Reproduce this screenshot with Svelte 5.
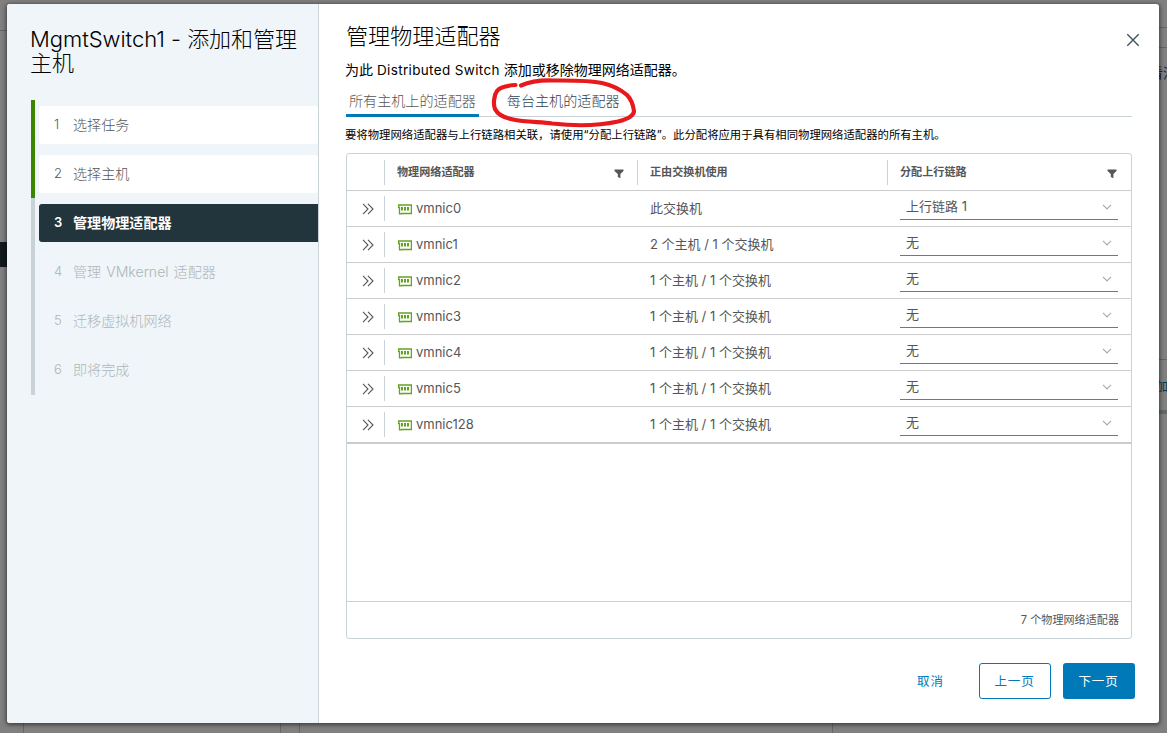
<script>
  // Wizard steps
  const steps = [
    { label: '选择任务', state: 'done' },
    { label: '选择主机', state: 'done' },
    { label: '管理物理适配器', state: 'active' },
    { label: '管理 VMkernel 适配器', state: 'pending' },
    { label: '迁移虚拟机网络', state: 'pending' },
    { label: '即将完成', state: 'pending' },
  ];

  // Physical adapters
  const adapters = [
    { name: 'vmnic0', usage: '此交换机', uplink: '上行链路 1' },
    { name: 'vmnic1', usage: '2 个主机 / 1 个交换机', uplink: '无' },
    { name: 'vmnic2', usage: '1 个主机 / 1 个交换机', uplink: '无' },
    { name: 'vmnic3', usage: '1 个主机 / 1 个交换机', uplink: '无' },
    { name: 'vmnic4', usage: '1 个主机 / 1 个交换机', uplink: '无' },
    { name: 'vmnic5', usage: '1 个主机 / 1 个交换机', uplink: '无' },
    { name: 'vmnic128', usage: '1 个主机 / 1 个交换机', uplink: '无' },
  ];

  let activeTab = $state('all');
</script>

{#snippet filterIcon()}
  <svg class="filter" width="10" height="10" viewBox="0 0 10 10">
    <path d="M0.5 0.5h9v1.4L6.4 5v4.2L3.8 8V5L0.5 1.9z" fill="#565656" />
  </svg>
{/snippet}

<div class="screen">
  <!-- Dimmed page behind the dialog -->
  <svg class="backdrop" width="1167" height="733" viewBox="0 0 1167 733">
    <path d="M0 30.5h8M1158 27.5h9M1158 47.5h9M1158 359.5h9M23.5 722v11M280.5 722v11M299.5 722v11M832.5 722v11" stroke="#666" />
    <rect x="0" y="242" width="7" height="25" fill="#11191d" />
    <rect x="1158" y="410" width="9" height="4" fill="#61686c" />
    <text x="1149" y="78" font-size="14" fill="#17203d">看清</text>
    <text x="1156" y="391" font-size="12" fill="#003b56">加</text>
  </svg>

  <div class="dialog">
    <aside class="sidebar">
      <h1>MgmtSwitch1 - <span>添加和管理</span><br />主机</h1>
      <ol class="steps">
        {#each steps as step, i}
          <li class={step.state}>
            <button type="button" disabled={step.state === 'pending'}>
              <span class="number">{i + 1}</span>
              <span>{step.label}</span>
            </button>
          </li>
        {/each}
      </ol>
    </aside>

    <main class="content">
      <header class="title-row">
        <h2>管理物理适配器</h2>
        <button type="button" class="close" aria-label="关闭">
          <svg width="14" height="14" viewBox="0 0 14 14">
            <path d="M1.3 1.3l11.4 11.4M12.7 1.3L1.3 12.7" stroke="#42535b" stroke-width="1.4" />
          </svg>
        </button>
      </header>

      <p class="subtitle">为此 <span class="latin">Distributed Switch</span> 添加或移除物理网络适配器。</p>

      <nav class="tabs">
        <button type="button" class:selected={activeTab === 'all'} onclick={() => (activeTab = 'all')}>所有主机上的适配器</button>
        <button type="button" class:selected={activeTab === 'host'} onclick={() => (activeTab = 'host')}>每台主机的适配器</button>
        <!-- Hand-drawn highlight around the second tab -->
        <svg class="marker" width="150" height="54" viewBox="488 76 150 54">
          <path
            d="M515.5 85C507 85.5 500 87 497 91C494 95 493 104 495 109C498 115 505 118 513 119.500C524 122 541 122 552 123.5C574 126 600 125.5 618 121.5C628 119 634 116 634 111C633 104 631 99 627 95C620 89 611 85 602 83C588 80 570 80.5 553 80.5C539 80 529 82 521 85.5"
            fill="none"
            stroke="#e8191c"
            stroke-width="4.2"
            stroke-linecap="round"
            stroke-linejoin="round"
          />
        </svg>
      </nav>

      <p class="hint">要将物理网络适配器与上行链路相关联，请使用“分配上行链路”。此分配将应用于具有相同物理网络适配器的所有主机。</p>

      <section class="datagrid">
        <div class="row head">
          <div class="cell expand"></div>
          <div class="cell name"><span>物理网络适配器</span>{@render filterIcon()}</div>
          <div class="cell usage"><span>正由交换机使用</span></div>
          <div class="cell uplink"><span>分配上行链路</span>{@render filterIcon()}</div>
        </div>
        {#each adapters as adapter}
          <div class="row">
            <div class="cell expand">
              <svg width="12" height="12" viewBox="0 0 12 12">
                <path d="M1 0.8L6 6L1 11.2M6 0.8L11 6L6 11.2" fill="none" stroke="#565656" stroke-width="1.1" />
              </svg>
            </div>
            <div class="cell name">
              <svg class="nic" width="14" height="11" viewBox="0 0 14 11">
                <path d="M1.5 7V9.9H3.5V9.5H13.4V1H0.6V3.5H1.5V7" fill="none" stroke="#62a420" stroke-width="1.3" />
                <path d="M4 3v3.5M7 3v3.5M10 3v3.5" stroke="#62a420" stroke-width="2" />
              </svg>
              <span>{adapter.name}</span>
            </div>
            <div class="cell usage"><span>{adapter.usage}</span></div>
            <div class="cell uplink">
              <div class="select">
                <span>{adapter.uplink}</span>
                <svg width="10" height="6" viewBox="0 0 10 6">
                  <path d="M1 0.8L5 4.8L9 0.8" fill="none" stroke="#aaa" stroke-width="1.2" />
                </svg>
              </div>
            </div>
          </div>
        {/each}
        <div class="filler"></div>
        <footer class="grid-footer">{adapters.length} 个物理网络适配器</footer>
      </section>

      <div class="actions">
        <button type="button" class="btn btn-link">取消</button>
        <button type="button" class="btn btn-outline">上一页</button>
        <button type="button" class="btn btn-primary">下一页</button>
      </div>
    </main>
  </div>
</div>

<style>
  :global(body) {
    overflow: hidden;
  }

  .screen {
    position: relative;
    box-sizing: border-box;
    width: 1167px;
    height: 733px;
    padding: 4px 8px 10px 7px;
    background: #808080;
    font-family: Inter, 'Noto Sans CJK SC', sans-serif;
    font-size: 13px;
    color: #565656;
    overflow: hidden;
  }

  .screen * {
    box-sizing: border-box;
  }

  button {
    font-family: inherit;
    background: none;
    border: 0;
    padding: 0;
    cursor: pointer;
  }

  .backdrop {
    position: absolute;
    top: 0;
    left: 0;
  }

  .dialog {
    position: relative;
    display: flex;
    height: 719px;
    border-radius: 3px;
    background: #fff;
    box-shadow: 0 1px 4px 1px rgba(0, 0, 0, 0.5);
    overflow: hidden;
  }

  .sidebar {
    width: 312px;
    flex: none;
    padding: 23px 0 0 24px;
    background: #eff5f8;
    border-right: 1px solid #c8d2d7;
  }

  h1 {
    height: 73px;
    margin: 0 0 0 -1px;
    font-size: 22px;
    font-weight: 300;
    line-height: 24px;
    letter-spacing: -0.03px;
    color: #000;
    white-space: nowrap;
  }

  .steps {
    list-style: none;
    margin: 0;
    padding: 0;
  }

  .steps li {
    height: 49px;
    padding: 6px 0 5px 4px;
    border-left: 4px solid #c8d2d7;
  }

  .steps li:last-child {
    height: 50px;
  }

  .steps li.done {
    border-left-color: #3c8500;
  }

  .steps button {
    display: flex;
    align-items: center;
    width: 100%;
    height: 38px;
    padding: 0 0 2px 15px;
    border-radius: 3px;
    font-size: 14.1px;
    font-weight: 300;
    text-align: left;
    color: #565656;
  }

  .steps .number {
    width: 19px;
    font-size: 13px;
  }

  .done button {
    background: #fff;
  }

  .active button {
    border-radius: 3px 0 0 3px;
    background: #22343c;
    color: #fff;
    font-weight: 600;
  }

  .pending button {
    color: #adb6ba;
    word-spacing: 1px;
  }

  .content {
    flex: 1;
    display: flex;
    flex-direction: column;
    padding: 17px 24px 0 27px;
  }

  .title-row {
    display: flex;
    justify-content: space-between;
    height: 36px;
    margin-right: -5px;
  }

  h2 {
    margin: 0;
    font-size: 22.1px;
    font-weight: 300;
    line-height: 30px;
    color: #000;
  }

  .close {
    width: 14px;
    height: 14px;
    margin: 12px 0 0;
    line-height: 0;
  }

  .subtitle {
    height: 27px;
    margin: 0 0 0 -1px;
    font-size: 14px;
    line-height: 26px;
    color: #000;
    white-space: nowrap;
  }

  .subtitle .latin {
    font-size: 13.5px;
    letter-spacing: 0.35px;
  }

  .tabs {
    position: relative;
    display: flex;
    gap: 25px;
    width: 786px;
    height: 33px;
    border-bottom: 1px solid #c8d2d7;
  }

  .tabs button {
    height: 33px;
    padding: 3px 3px 0;
    border-bottom: 3px solid transparent;
    font-size: 14.1px;
    font-weight: 300;
    line-height: 28px;
    color: #314351;
    white-space: nowrap;
  }

  .tabs button.selected {
    border-bottom-color: #0079b8;
    color: #565656;
  }

  .marker {
    position: absolute;
    top: -8px;
    left: 142px;
    pointer-events: none;
  }

  .hint {
    height: 36px;
    margin: 0 0 0 -1px;
    font-size: 11.37px;
    line-height: 36px;
    color: #000;
    white-space: nowrap;
  }

  .datagrid {
    display: flex;
    flex-direction: column;
    width: 786px;
    height: 486px;
    border: 1px solid #c8d2d7;
    border-radius: 3px;
  }

  .row {
    display: flex;
    align-items: center;
    height: 36px;
    border-bottom: 1px solid #ccc;
  }

  .row:nth-last-child(3) {
    height: 37px;
    border-bottom-width: 2px;
  }

  .head {
    height: 37px;
    font-size: 11.1px;
    font-weight: 600;
  }

  .cell {
    display: flex;
    align-items: center;
    height: 25px;
    padding-left: 12px;
    white-space: nowrap;
  }

  .cell > span {
    padding-bottom: 2px;
  }

  .expand {
    width: 38px;
    padding-left: 15px;
    border-right: 1px solid #c8d2d7;
  }

  .name {
    width: 253px;
  }

  .usage {
    width: 250px;
  }

  .uplink {
    width: 243px;
  }

  .head .name,
  .head .usage {
    border-right: 1px solid #c8d2d7;
  }

  .filter {
    margin: 3px 13px 0 auto;
  }

  .head .uplink .filter {
    margin-right: 14px;
  }

  .nic {
    margin: 1px 4px 0 1px;
  }

  .select {
    display: flex;
    align-items: center;
    justify-content: space-between;
    width: 218px;
    height: 25px;
    margin-bottom: 1px;
    padding: 0 6px 1px;
    border-bottom: 1px solid #6a7a81;
  }

  .select span {
    padding-bottom: 2px;
  }

  .row:not(.head) .uplink {
    align-items: flex-end;
  }

  .filler {
    flex: 1;
  }

  .grid-footer {
    height: 37px;
    padding-right: 12px;
    border-top: 1px solid #c8d2d7;
    font-size: 11.1px;
    line-height: 37px;
    text-align: right;
  }

  .actions {
    display: flex;
    justify-content: flex-end;
    gap: 12px;
    margin: 24px 0 0;
    margin-right: 0;
  }

  .btn {
    width: 72px;
    height: 36px;
    padding: 0 1px 2px 0;
    border: 1px solid transparent;
    border-radius: 3px;
    font-size: 12.5px;
    letter-spacing: 0.9px;
    color: #0079b8;
  }

  .btn-outline {
    border-color: #0079b8;
  }

  .btn-primary {
    background: #0079b8;
    color: #fff;
  }
</style>
